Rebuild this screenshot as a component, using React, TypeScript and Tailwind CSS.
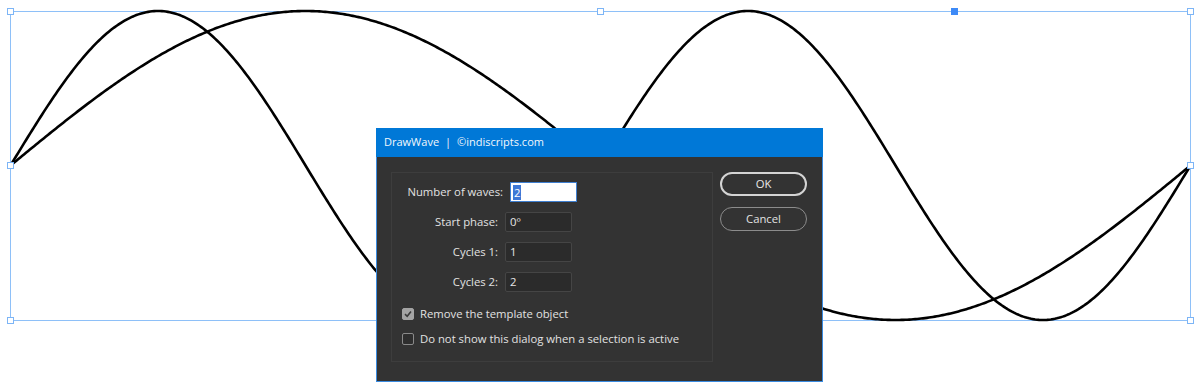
import React from "react";

function wavePath(cycles: number) {
  const pts: string[] = [];
  const N = 600;
  for (let i = 0; i <= N; i++) {
    const t = i / N;
    const x = 10.5 + 1180 * t;
    const y = 165.5 - 154.5 * Math.sin(2 * Math.PI * cycles * t);
    pts.push(`${i === 0 ? "M" : "L"}${x.toFixed(2)},${y.toFixed(2)}`);
  }
  return pts.join(" ");
}

function Handle({ x, y, filled }: { x: number; y: number; filled?: boolean }) {
  return (
    <rect
      x={x - 3}
      y={y - 3}
      width={6}
      height={6}
      fill={filled ? "#3d8af7" : "#ffffff"}
      stroke={filled ? "#3d8af7" : "#7db5f6"}
      strokeWidth={1}
    />
  );
}

function Field({ label, value, focused }: { label: string; value: string; focused?: boolean }) {
  return (
    <div className={`flex items-center h-[20px] ${focused ? "ml-[5px]" : ""}`}>
      <div className="w-[106px] text-right pr-0">{label}</div>
      <div
        className={
          focused
            ? "ml-[7px] w-[67px] h-[20px] bg-white border border-[#3f7fd0] flex items-center pl-[2px]"
            : "ml-[7px] w-[67px] h-[20px] bg-[#2b2b2b] border border-[#454545] rounded-[2px] flex items-center pl-[4px] text-[#e6e6e6]"
        }
      >
        {focused ? (
          <span className="bg-[#3e78d6] text-white leading-[15px] px-[1px]">{value}</span>
        ) : (
          value
        )}
      </div>
    </div>
  );
}

function Check({ label, checked }: { label: string; checked?: boolean }) {
  return (
    <div className="flex items-center h-[14px]">
      <div
        className={
          checked
            ? "w-[12px] h-[12px] rounded-[2px] bg-[#a3a3a3] border border-[#a3a3a3] flex items-center justify-center"
            : "w-[12px] h-[12px] rounded-[2px] bg-[#2e2e2e] border border-[#8a8a8a]"
        }
      >
        {checked && (
          <svg width="10" height="10" viewBox="0 0 10 10">
            <path d="M2 5.2 L4.2 7.3 L8 2.6" fill="none" stroke="#3a3a3a" strokeWidth="1.6" />
          </svg>
        )}
      </div>
      <span className="ml-[6px]">{label}</span>
    </div>
  );
}

export default function App() {
  return (
    <div className="relative w-[1200px] h-[390px] bg-white overflow-hidden">
      <svg width="1200" height="390" className="block">
        <rect x={10.5} y={11.5} width={1180} height={309} fill="none" stroke="#8ec0f8" strokeWidth={1} />
        <path d={wavePath(1)} fill="none" stroke="#000" strokeWidth={2.6} strokeLinejoin="round" />
        <path d={wavePath(2)} fill="none" stroke="#000" strokeWidth={2.6} strokeLinejoin="round" />
        <Handle x={10.5} y={11.5} />
        <Handle x={600.5} y={11.5} />
        <Handle x={1190.5} y={11.5} />
        <Handle x={10.5} y={165.5} />
        <Handle x={1190.5} y={165.5} />
        <Handle x={10.5} y={320.5} />
        <Handle x={600.5} y={320.5} />
        <Handle x={1190.5} y={320.5} />
        <Handle x={954.5} y={11.5} filled />
      </svg>

      <div
        className="absolute left-[376px] top-[128px] w-[447px] h-[254px] bg-[#333333] border border-[#3a8be0] border-t-0 flex flex-col text-[11.3px] text-[#e2e2e2]"
        style={{ fontFamily: '"Open Sans", "Noto Sans", sans-serif' }}
      >
        <div className="h-[29px] bg-[#0078d7] text-[#f2f7fc] text-[11px] flex items-center pl-[8px] -mx-px">
          <span>DrawWave</span>
          <span className="mx-[6px]">|</span>
          <span>©indiscripts.com</span>
        </div>
        <div className="flex pl-[14px] pt-[15px]">
          <div className="w-[322px] h-[190px] border border-[#3d3d3d] pt-[9px] pl-[0px]">
            <div className="flex flex-col gap-[10px]">
              <Field label="Number of waves:" value="2" focused />
              <Field label="Start phase:" value="0º" />
              <Field label="Cycles 1:" value="1" />
              <Field label="Cycles 2:" value="2" />
            </div>
            <div className="flex flex-col gap-[11px] pl-[10px] mt-[15px]">
              <Check label="Remove the template object" checked />
              <Check label="Do not show this dialog when a selection is active" />
            </div>
          </div>
          <div className="flex flex-col gap-[11px] ml-[7px]">
            <button className="w-[87px] h-[24px] rounded-full border-2 border-[#d4d4d4] text-[#e8e8e8] flex items-center justify-center">
              OK
            </button>
            <button className="w-[87px] h-[24px] rounded-full border border-[#8c8c8c] text-[#e2e2e2] flex items-center justify-center">
              Cancel
            </button>
          </div>
        </div>
      </div>
    </div>
  );
}
